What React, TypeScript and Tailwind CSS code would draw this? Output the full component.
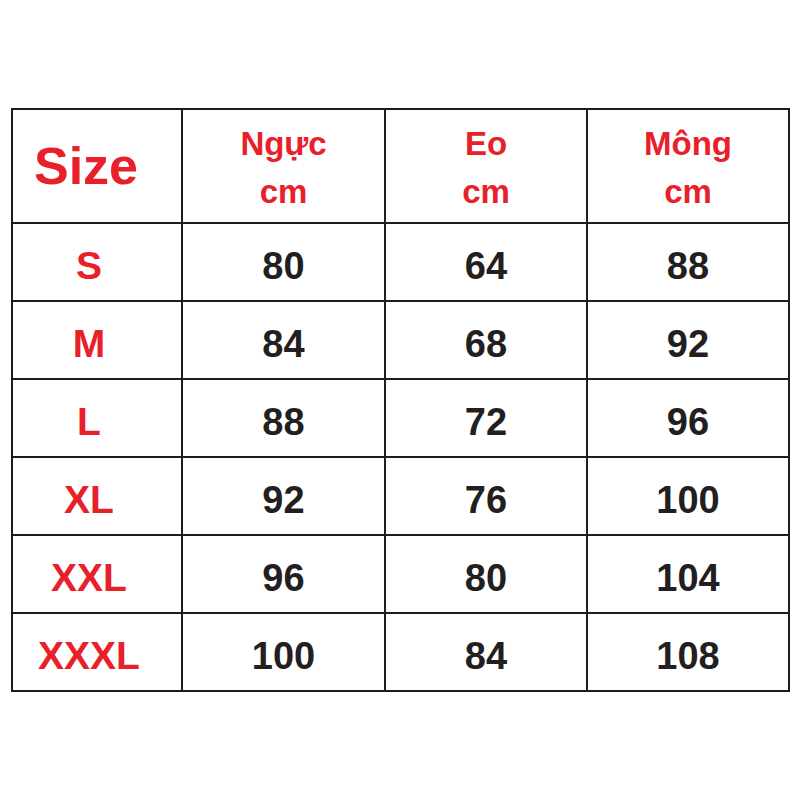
import { Fragment } from "react"

const rows = [
  { size: "S", chest: "80", waist: "64", hip: "88" },
  { size: "M", chest: "84", waist: "68", hip: "92" },
  { size: "L", chest: "88", waist: "72", hip: "96" },
  { size: "XL", chest: "92", waist: "76", hip: "100" },
  { size: "XXL", chest: "96", waist: "80", hip: "104" },
  { size: "XXXL", chest: "100", waist: "84", hip: "108" },
]

const headers = ["Ngực", "Eo", "Mông"]

export default function App() {
  return (
    <div className="w-[800px] h-[800px] bg-white pt-[108px] pl-[11px] font-['Liberation_Sans',Arial,sans-serif] font-bold">
      <div className="grid w-fit grid-cols-[168px_201px_200px_200px] grid-rows-[112px_repeat(6,76px)] gap-[2px] border-2 border-[#1f1c1d] bg-[#1f1c1d]">
        <div className="flex items-center justify-center bg-white pr-[22px] text-[52px] text-[#e8202a]">Size</div>
        {headers.map((h) => (
          <div
            key={h}
            className="flex flex-col items-center justify-center bg-white pt-1 text-[33px] leading-[48px] text-[#e8202a]"
          >
            <span>{h}</span>
            <span>cm</span>
          </div>
        ))}

        {rows.map((r) => (
          <Fragment key={r.size}>
            <div className="flex items-center justify-center bg-white pt-2 pr-4 text-[39px] text-[#e8202a]">
              {r.size}
            </div>
            <div className="flex items-center justify-center bg-white pt-2 text-[38px] text-[#231f20]">{r.chest}</div>
            <div className="flex items-center justify-center bg-white pt-2 text-[38px] text-[#231f20]">{r.waist}</div>
            <div className="flex items-center justify-center bg-white pt-2 text-[38px] text-[#231f20]">{r.hip}</div>
          </Fragment>
        ))}
      </div>
    </div>
  )
}
